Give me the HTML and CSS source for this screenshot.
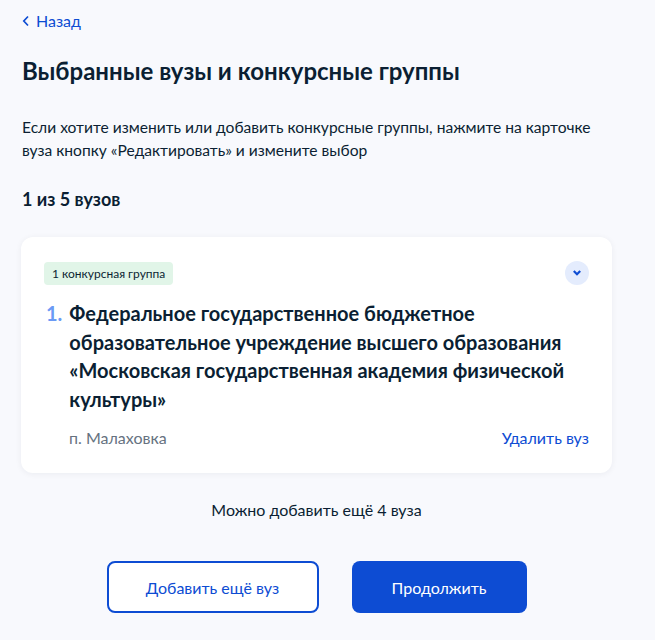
FILE: index.html
```html
<!DOCTYPE html>
<html lang="ru">
<head>
  <meta charset="UTF-8" />
  <title>Выбранные вузы</title>
  <link rel="stylesheet" href="styles.css">
</head>
<body>

<div class="page">
  <a href="#" class="back-link">
    <svg width="8" height="12" viewBox="0 0 8 12"><path d="M6 1.5 L1.8 6 L6 10.5" fill="none" stroke="#0d4cd3" stroke-width="1.7"/></svg>
    Назад
  </a>

  <h1>Выбранные вузы и конкурсные группы</h1>

  <p class="hint">Если хотите изменить или добавить конкурсные группы, нажмите на карточке вуза кнопку «Редактировать» и измените выбор</p>

  <h2>1 из 5 вузов</h2>

  <div class="card">
    <div class="card-top">
      <span class="badge">1 конкурсная группа</span>
      <button class="toggle">
        <svg width="10" height="8" viewBox="0 0 10 8"><path d="M1.8 2 L5 5.2 L8.2 2" fill="none" stroke="#0d4cd3" stroke-width="2.2"/></svg>
      </button>
    </div>
    <div class="uni">
      <span class="num">1.</span>
      <span class="uni-name">Федеральное государственное бюджетное образовательное учреждение высшего образования «Московская государственная академия физической культуры»</span>
    </div>
    <div class="card-bottom">
      <span class="city">п. Малаховка</span>
      <a href="#" class="remove">Удалить вуз</a>
    </div>
  </div>

  <p class="more">Можно добавить ещё 4 вуза</p>

  <div class="actions">
    <button class="btn btn-outline">Добавить ещё вуз</button>
    <button class="btn btn-primary">Продолжить</button>
  </div>
</div>

</body>
</html>
```

FILE: styles.css
```css
body {
  font-family: Lato, "Noto Sans", sans-serif;
  background: #f8f9fd;
  margin: 0;
  color: #0b1f33;
}
.page {
  width: 591px;
  padding: 11px 0 0 21px;
}
.back-link {
  display: flex;
  align-items: center;
  gap: 6px;
  color: #0d4cd3;
  text-decoration: none;
  font-size: 16px;
  margin-left: 1px;
}
h1 {
  font-size: 24px;
  font-weight: 700;
  margin: 25px 0 0 1px;
  line-height: 32px;
}
.hint {
  font-size: 15.6px;
  line-height: 23px;
  margin: 29px 0 0 1px;
}
h2 {
  font-size: 18px;
  font-weight: 700;
  margin: 25px 0 0 1px;
  line-height: 24px;
}
.card {
  background: white;
  border-radius: 12px;
  box-shadow: 0 1px 6px rgba(11,31,51,0.06);
  margin-top: 26px;
  padding: 24px 23px 25px 23px;
}
.card-top {
  display: flex;
  justify-content: space-between;
  align-items: center;
}
.badge {
  background: #e1f5e8;
  border-radius: 4px;
  font-size: 12px;
  padding: 4px 8px;
  line-height: 15px;
}
.toggle {
  width: 24px;
  height: 24px;
  border-radius: 50%;
  border: none;
  background: #e4ecfd;
  display: flex;
  align-items: center;
  justify-content: center;
  padding: 0;
}
.uni {
  display: flex;
  gap: 7px;
  margin-top: 14px;
  font-size: 20px;
  font-weight: 700;
  line-height: 28.5px;
  margin-left: 2px;
}
.num {
  color: #6b9af5;
}
.card-bottom {
  display: flex;
  justify-content: space-between;
  margin: 15px 0 0 25px;
  font-size: 16px;
  line-height: 20px;
}
.city {
  color: #66727f;
}
.remove {
  color: #0d4cd3;
  text-decoration: none;
}
.more {
  text-align: center;
  font-size: 16px;
  margin: 27px 0 0;
}
.actions {
  display: flex;
  justify-content: center;
  gap: 33px;
  margin-top: 42px;
}
.btn {
  height: 52px;
  border-radius: 8px;
  font-family: Lato, "Noto Sans", sans-serif;
  font-size: 16px;
  cursor: pointer;
}
.btn-outline {
  width: 212px;
  background: white;
  border: 2px solid #0d4cd3;
  color: #0d4cd3;
}
.btn-primary {
  width: 175px;
  background: #0d4cd3;
  border: none;
  color: white;
}
```
